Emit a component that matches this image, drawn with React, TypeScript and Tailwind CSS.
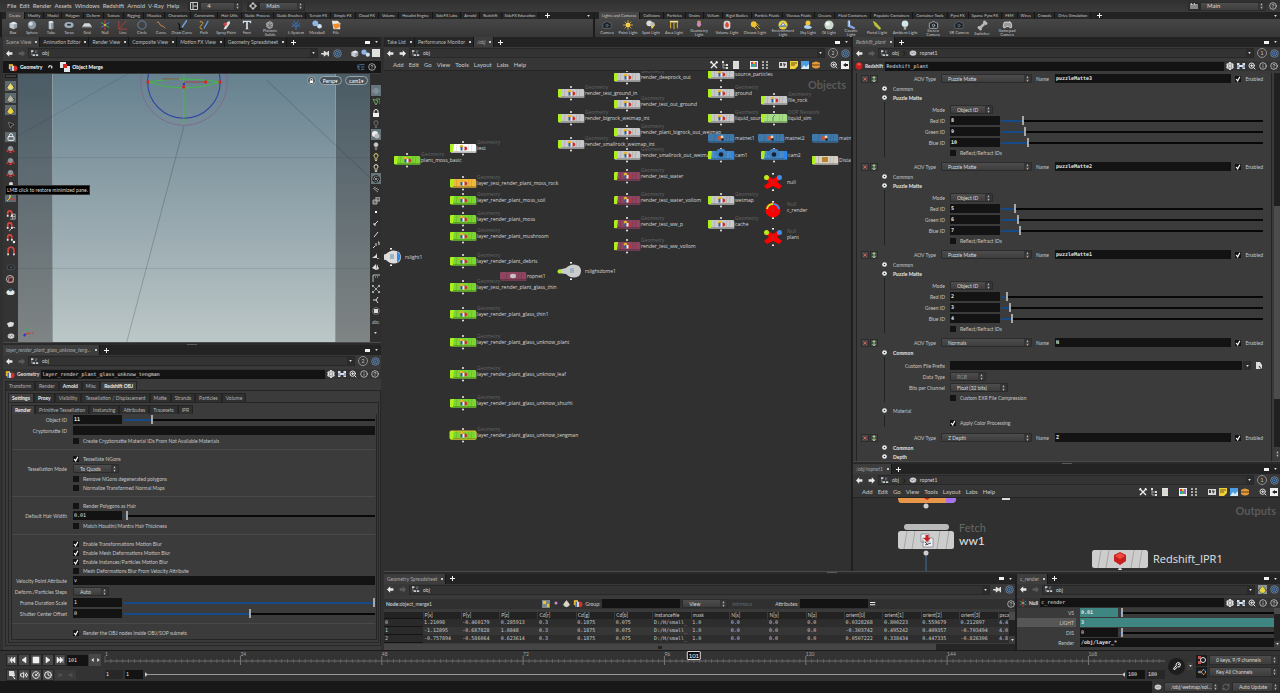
import React from 'react';
import {
  Aperture, Bone, Camera, CircleGauge, CircleHelp, Clock, Eye, Gamepad2, Info, KeyRound,
  Lightbulb, ListTree, Lock, MousePointer2, RefreshCw, Settings, Volume2, ZoomIn,
} from 'lucide-react';
import clsx from 'clsx';
import { twMerge } from 'tailwind-merge';

const tiny = 'h-2 w-2 shrink-0';

/* ---------- small drawings ---------- */

const toolArt: Record<string, React.ReactNode> = {
  Box: <><path d="M2 4l5-2 4 2v5l-4 2-5-2z" fill="#9aa3aa" /><path d="M2 4l5 1.500v5.500l-5-2z" fill="#c3cbd1" /><path d="M2 4l5-2 4 2-4 1.500z" fill="#e3e8ec" /></>,
  Sphere: <><circle cx="6" cy="6" r="5" fill="#8c98a3" /><circle cx="4.500" cy="4.500" r="2.500" fill="#cfd8df" /></>,
  Tube: <><path d="M3 2.500v8q3 1.500 6 0v-8z" fill="#8e9aa4" /><path d="M4 3v7.500h2V3z" fill="#c9d1d7" /><ellipse cx="6" cy="2.500" rx="3" ry="1.300" fill="#dfe5e9" /></>,
  Torus: <><ellipse cx="6" cy="6" rx="5.500" ry="3.500" fill="#9fb0be" /><ellipse cx="6" cy="5.600" rx="2.500" ry="1.200" fill="#333" /></>,
  Grid: <><path d="M3 4h6l3 4H0z" fill="#d4d8db" /><path d="M0 8h12v1H0z" fill="#8b8f92" /></>,
  Null: <><path d="M6 0v12" stroke="#d33" strokeWidth="1.200" /><path d="M1 3l10 6" stroke="#3fae49" strokeWidth="1.200" /><path d="M11 3L1 9" stroke="#3a7fe0" strokeWidth="1.200" /><circle cx="6" cy="6" r="1.200" fill="#f3c63a" /></>,
  Line: <path d="M1 11L10 1M1 11h10M1 11V1" stroke="#b2423f" fill="none" />,
  Circle: <circle cx="6" cy="6" r="5" stroke="#6f8fb5" fill="none" />,
  Curve: <path d="M1 3q2-2 3 1t3 3 4 3" stroke="#d08a4a" fill="none" strokeWidth="1.200" />,
  'Draw Curve': <><path d="M1 4q3 1 2 5t4 1" stroke="#111" fill="none" strokeWidth="1.500" /><path d="M12 0L6 9" stroke="#6fa2dd" strokeWidth="1.800" /></>,
  Path: <><path d="M1 2q6 0 2 4t1 5" stroke="#d9a534" fill="none" strokeWidth="1.200" /><path d="M11 1L6 10" stroke="#5f96d8" strokeWidth="1.500" /></>,
  'Spray Paint': <><path d="M3 11L7 3l3-2 1 3-5 7z" fill="#d8dbdd" /><circle cx="5" cy="5" r="2" fill="#cf4444" /></>,
  Font: <path d="M1 1h10v3h-1L9 2.500H7V10l1 1H4l1-1V2.500H3L2 4H1z" fill="#d6e2ee" />,
  'Platonic Solids': <><path d="M6 1l4 3-1 5-3 2-4-2-1-5z" fill="#a9a9a9" /><path d="M6 1v10M2 4l7 5M10 4L2 9" stroke="#666" /></>,
  'L-System': <path d="M6 12V5M6 8L1 4M6 8l5-4M6 5L3 1M6 5l3-4M1 8l3-1M11 8L8 7" stroke="#3c75bd" strokeWidth="1.200" fill="none" />,
  Metaball: <><circle cx="4" cy="4" r="3.500" fill="#8db6e4" /><circle cx="9" cy="7.500" r="2.800" fill="#cfe0f3" /></>,
  File: <><path d="M1 1h7l3 3v7H3z" fill="#e8e4dc" /><path d="M2 5l8-1 1 4-6 3z" fill="#ee8a2c" /></>,
  'Point Light': <><circle cx="6" cy="6" r="2.800" fill="#ffe682" /><path d="M6 0v12M0 6h12M2 2l8 8M10 2l-8 8" stroke="#eec02f" strokeWidth="0.900" /></>,
  'Spot Light': <><circle cx="4" cy="4" r="3.500" fill="#dcdcdc" /><path d="M5 4l6 2-4 5z" fill="#f2cf46" /><circle cx="8" cy="5" r="2.500" fill="#b8bcbf" /></>,
  'Area Light': <><path d="M1 1h10v2H1z" fill="#f7e18a" /><path d="M2 3v7M6 3v8M10 3v7" stroke="#e4b52f" strokeWidth="1.200" /></>,
  'Geometry Light': <><path d="M4 1h4v6q-2 3-4 0z" fill="#cda24a" /><circle cx="6" cy="5" r="2.500" fill="#c986c2" /></>,
  'Volume Light': <><rect x="2" y="1" width="8" height="10" rx="3" fill="#d3d6d8" /><path d="M6 2q4 4 1 7H5Q2 6 6 2z" fill="#e7452b" /></>,
  'Distant Light': <><circle cx="4.500" cy="5" r="3.500" fill="#efc12f" /><path d="M6 5l6 6M8 4l3 3M4 8l4 3" stroke="#efc12f" /></>,
  'Environment Light': <><circle cx="6" cy="6" r="5.500" fill="#f0cf3c" /><path d="M1 8h10M6 3l3 4H3z" stroke="#4a7bb7" fill="#cfe0f0" /></>,
  'Sky Light': <><circle cx="6" cy="3.500" r="3" fill="#f2c632" /><path d="M1 8q2-3 5-2t5 3q-4 3-9 1z" fill="#aecdf0" /></>,
  'GI Light': <><circle cx="6" cy="6" r="5.500" fill="#ccd8cd" /><circle cx="4.500" cy="4.500" r="2.500" fill="#eef3ee" /></>,
  'Caustic Light': <><path d="M2 1h3v5l6 3-1 2-8-3z" fill="#86a9df" /><path d="M3 1h1v6" stroke="#eaf0fa" fill="none" /></>,
  'Portal Light': <><path d="M1 1l4 2 6 7-2 2-6-5z" fill="#a4b13f" /><path d="M2 2l8 9" stroke="#e7cf45" /></>,
  'Ambient Light': <><circle cx="6" cy="4.500" r="4" fill="#cfe9ea" /><path d="M4.500 8h3v3.500h-3z" fill="#a7aeb0" /></>,
};

function ToolIcon({ name }: { name: string }) {
  if (name === 'Gamepad Camera') return <Gamepad2 className="h-[11px] w-[11px] text-[#e4e4e4]" fill="#999" />;
  if (name === 'Switcher') return <Bone className="h-[11px] w-[11px] text-[#bbb]" fill="#bbb" />;
  if (name === 'VR Camera' || name === 'Camera') return <Camera className="h-[10px] w-[10px] text-[#5d6d7a]" fill="#1b1f22" />;
  if (name === 'Stereo Camera') return <Camera className="h-[11px] w-[11px] text-[#a9bfcd]" fill="#222" />;
  return <svg viewBox="0 0 12 12" className="h-[10px] w-[10px]">{toolArt[name]}</svg>;
}

function Spin() {
  return (
    <svg viewBox="0 0 4 8" className="h-[6px] w-[3px] shrink-0" fill="#b5b5b5">
      <path d="M2 0l1.500 3h-3zM2 8L.5 5h3z" />
    </svg>
  );
}

function Plus() {
  return <svg viewBox="0 0 5 5" className="h-[5px] w-[5px]"><path d="M2 0h1v2h2v1H3v2H2V3H0V2h2z" fill="#f2f2f2" /></svg>;
}

function Caret() {
  return <svg viewBox="0 0 4 3" className="h-[2px] w-[3px]" fill="#ddd"><path d="M0 0h4L2 3z" /></svg>;
}

function Arrow({ flip, on }: { flip?: boolean; on?: boolean }) {
  return (
    <svg viewBox="0 0 10 8" className={clsx('h-[7px] w-[8px] shrink-0', flip && 'rotate-180')}>
      <path d="M0 4l4-4v2.500h4v3H4V8z" fill={on ? '#e8e8e8' : '#5c5c5c'} />
    </svg>
  );
}

function PinIcon() {
  return (
    <svg viewBox="0 0 10 8" className="h-[7px] w-[9px] shrink-0">
      <path d="M0 3.500h3V5H0zM3 1h1.500l1 1.500h2V1H9v6H7.500V5.500h-2l-1 1.500H3z" fill="#dedede" />
    </svg>
  );
}

function GeoIcon() {
  return (
    <svg viewBox="0 0 12 10" className="h-[9px] w-[10px] shrink-0">
      <rect x="1" y="1" width="5" height="6" fill="#e9b62f" />
      <circle cx="8" cy="6" r="3.500" fill="#cf3329" />
      <path d="M3 3h4v6H3z" fill="#e8edf2" />
      <path d="M3 3h2v6H3z" fill="#3a6ba8" />
    </svg>
  );
}

function RedshiftIcon() {
  return (
    <svg viewBox="0 0 12 12" className="h-2 w-2 shrink-0">
      <path d="M6 0l5 3v6l-5 3-5-3V3z" fill="#c8201e" />
      <path d="M6 1l4 2-4 3-4-3z" fill="#ef4b43" />
    </svg>
  );
}

function NetIcon() {
  return (
    <svg viewBox="0 0 10 8" className="h-[7px] w-[8px] shrink-0">
      <path d="M0 0h3v2H0zM2 5h3v2H2zM6 5h3v2H6z" fill="#c6cdd2" />
      <path d="M1 2v4h1M5 1h3M5 3h2" stroke="#8a8f93" fill="none" />
    </svg>
  );
}

function Disc() {
  return (
    <svg viewBox="0 0 10 10" className="h-[9px] w-[9px] shrink-0">
      <circle cx="5" cy="5" r="4.200" fill="#2b3948" stroke="#8298b0" strokeWidth="0.800" />
      <circle cx="5" cy="5" r="2.400" fill="none" stroke="#5d87bd" />
      <circle cx="5" cy="5" r="1" fill="#4f83c4" />
    </svg>
  );
}

function NetBall() {
  return (
    <svg viewBox="0 0 10 8" className="h-[6px] w-[8px] shrink-0">
      <ellipse cx="5" cy="4" rx="4.500" ry="3.500" fill="#cfcfcf" />
      <path d="M2 3l2 2 2-2 2 2" stroke="#777" fill="none" />
    </svg>
  );
}

/* ---------- form controls ---------- */

function TextBox({ label, value, className }: { label: string; value: string; className?: string }) {
  return (
    <input
      aria-label={label}
      defaultValue={value}
      className={twMerge('h-[9px] min-w-0 bg-[#131313] px-px font-[DejaVu_Sans_Mono,monospace] text-[5px] leading-[9px] text-[#e4e4e4] outline-none', className)}
    />
  );
}

function Select({ label, value, className, dim }: { label: string; value: string; className?: string; dim?: boolean }) {
  return (
    <span className={twMerge('flex h-[9px] shrink-0 items-center rounded-[1px] border border-[#2b2b2b] bg-linear-to-b from-[#4d4d4d] to-[#3d3d3d]', className)}>
      <select aria-label={label} defaultValue={value} className={clsx('h-full min-w-0 flex-1 appearance-none pl-[6px] outline-none', dim ? 'text-[#909090]' : 'text-[#dcdcdc]')}>
        <option>{value}</option>
      </select>
      <span className="flex h-full w-[7px] items-center justify-center bg-[#353535]"><Spin /></span>
    </span>
  );
}

function Check({ label, checked }: { label: string; checked?: boolean }) {
  return (
    <label className="flex items-center gap-1 whitespace-nowrap">
      <span className="grid h-[6px] w-[6px]">
        <input type="checkbox" defaultChecked={checked} className="peer col-start-1 row-start-1 h-[6px] w-[6px] appearance-none bg-[#131313]" />
        <svg viewBox="0 0 8 8" className="pointer-events-none invisible col-start-1 row-start-1 h-[6px] w-[6px] peer-checked:visible">
          <path d="M1.500 4l2 2.500L6.500 1" stroke="#fff" strokeWidth="1.600" fill="none" />
        </svg>
      </span>
      {label}
    </label>
  );
}

function Slider({ label, value }: { label: string; value: number }) {
  return (
    <input
      type="range"
      aria-label={label}
      defaultValue={value}
      style={{ backgroundImage: `linear-gradient(to right, #164a86 ${value}%, #080808 ${value}%)` }}
      className="h-[9px] min-w-0 flex-1 appearance-none bg-[length:100%_2px] bg-center bg-no-repeat [&::-webkit-slider-thumb]:h-[9px] [&::-webkit-slider-thumb]:w-[2px] [&::-webkit-slider-thumb]:appearance-none [&::-webkit-slider-thumb]:bg-[#a8a8a8]"
    />
  );
}

/* ---------- pane chrome ---------- */

function PaneTabs({ tabs, active = 0 }: { tabs: string[]; active?: number }) {
  return (
    <div className="flex h-[10px] shrink-0 items-stretch bg-[#232323]">
      {tabs.map((tab, i) => (
        <button key={tab} className={clsx('flex shrink-0 items-center gap-[4px] border-r border-[#161616] pl-[3px] pr-[2px]', i === active ? 'bg-[#3d3d3d] text-[#a8a8a8]' : 'bg-[#262626] text-[#bdbdbd]', (tab.includes('_') || tab.startsWith('/')) && tab !== 'c_render' && 'italic')}>
          <span>{tab}</span>
          <span className="h-[2px] w-[2px] bg-[#c8c8c8]" />
        </button>
      ))}
      <button aria-label="Add tab" className="flex items-center pl-[4px]"><Plus /></button>
      <span className="ml-auto flex items-center gap-[5px] pr-[3px]">
        <span className="h-[3px] w-[5px] bg-[#f2f2f2]" />
        <Caret />
      </span>
    </div>
  );
}

function PathBar({ crumbs, forward, children }: { crumbs: string[]; forward?: boolean; children: React.ReactNode }) {
  return (
    <div className="flex h-[12px] shrink-0 items-center gap-[3px] bg-[#383838] pl-[3px] pr-px">
      <button aria-label="Back"><Arrow on /></button>
      <button aria-label="Forward"><Arrow flip on={forward} /></button>
      <div className="flex h-[10px] min-w-0 flex-1 items-center gap-[3px] border border-[#282828] bg-[#333] pl-[2px] text-[#d4d4d4]">
        {crumbs.map((c, i) => (
          <span key={c} className="flex items-center gap-[3px]">
            {i > 0 ? <><span className="text-[#1c1c1c]">❯</span><NetBall /></> : <NetIcon />}
            {c}
          </span>
        ))}
        <button aria-label="Path history" className="ml-auto flex h-full w-[7px] items-center justify-center bg-[#2b2b2b]"><Caret /></button>
      </div>
      {children}
    </div>
  );
}

function Num({ n }: { n: number }) {
  return <span className="flex h-[10px] w-[10px] shrink-0 items-center justify-center rounded-full border border-[#8f8f8f] text-[#ccc]">{n}</span>;
}

function Splitter() {
  return (
    <div className="flex h-[3px] shrink-0 items-center justify-center border-t border-[#4a4a4a] bg-[#2a2a2a]">
      <span className="h-px w-[10px] bg-[#5a5a5a]" />
    </div>
  );
}

function NameBar({ icon, kind, name }: { icon: React.ReactNode; kind: string; name: string }) {
  return (
    <div className="flex h-[10px] shrink-0 items-center gap-[2px] bg-[#333] pl-[2px]">
      {icon}
      <span className="font-bold text-[#e0e0e0]">{kind}</span>
      <TextBox label="Node name" value={name} className="flex-1" />
      <span className="flex items-center gap-[3px] pr-[2px] text-[#e6e6e6]">
        <Settings className={tiny} strokeWidth={4} />
        <svg viewBox="0 0 8 8" className={tiny}><path d="M0 1h2.500v6H0zM5.500 1H8v6H5.500zM2 3h4v2H2z" fill="#d7deec" /><path d="M1 3v3M7 3v3" stroke="#52648c" /></svg>
        <ZoomIn className={tiny} strokeWidth={3} />
        <Info className={tiny} strokeWidth={2} />
        <CircleHelp className={tiny} strokeWidth={2} />
      </span>
    </div>
  );
}

function NetMenu() {
  return (
    <div className="flex h-[12px] shrink-0 items-center gap-[5px] border-b border-[#252525] bg-[#363636] pl-[9px] pr-[2px] text-[6px] text-[#c9c9c9]">
      {['Add', 'Edit', 'Go', 'View', 'Tools', 'Layout', 'Labs', 'Help'].map((m) => <button key={m}>{m}</button>)}
      <span className="ml-auto flex items-center gap-[10px]">
        <span className="flex gap-[3px]">
          <svg viewBox="0 0 8 8" className={tiny}><path d="M1 1l6 6M7 1L1 7" stroke="#f0f0f0" strokeWidth="1.300" /><path d="M0 2l2-2M6 0l2 2" stroke="#f0f0f0" strokeWidth="1.200" /></svg>
          <svg viewBox="0 0 8 8" className={tiny}><path d="M2 1v6h3M2 4h3" stroke="#bbb" fill="none" strokeWidth=".8" /><path d="M1 0h2v2H1zM5 3h2v2H5zM5 6h2v2H5z" fill="#ddd" /></svg>
          <svg viewBox="0 0 8 8" className={tiny}><path d="M1 0h6v8H1z" fill="#e4e4e0" /><path d="M1 2h6M1 4h6M1 6h6" stroke="#bbb" strokeWidth=".5" /></svg>
        </span>
        <span className="flex gap-[3px]">
          <svg viewBox="0 0 8 8" className={tiny}><path d="M0 0h8v8H0z" fill="#eee" /><path d="M1 1h2v2H1z" fill="#d33" /><path d="M3 1h2v2H3z" fill="#e9c22c" /><path d="M1 3h2v3H1z" fill="#39c" /><path d="M3 3h2v3H3z" fill="#4b4" /><path d="M5 1h2v5H5z" fill="#96c" /></svg>
          <svg viewBox="0 0 8 8" className={tiny} fill="#aaa"><path d="M1 0h2v2H1zM5 0h2v2H5zM1 3h2v2H1zM5 3h2v2H5zM1 6h2v2H1zM5 6h2v2H5z" /></svg>
        </span>
        <span className="flex gap-[3px]">
          <svg viewBox="0 0 8 8" className={tiny}><path d="M0 1h8v6H0z" fill="#d9d9d9" /><path d="M4 2l3 1-2 3zM1 2h2v3H1z" fill="#444" /></svg>
          <svg viewBox="0 0 8 8" className={tiny}><path d="M0 0h8v5L5 8H0z" fill="#f0cf3a" /><path d="M1 2h6M1 4h4" stroke="#6b5a10" /></svg>
          <svg viewBox="0 0 8 8" className={tiny}><path d="M0 0h8v8H0z" fill="#4d9be0" /><path d="M0 8l3-4 2 2 3-3v5z" fill="#d9ecf5" /></svg>
          <svg viewBox="0 0 8 8" className={tiny}><path d="M0 2q4-3 8 0v4q-4 3-8 0z" fill="#e09a3e" /><path d="M0 4h8" stroke="#6e3f10" /></svg>
        </span>
        <span className="flex gap-[3px]">
          <ZoomIn className={tiny} strokeWidth={3} color="#ddd" />
          <svg viewBox="0 0 8 8" className={tiny}><path d="M0 0h8v8H0z" fill="#f0f0f0" /><path d="M2 4l3-2v4z" fill="#222" /><path d="M5 3h2v2H5z" fill="#222" /></svg>
        </span>
      </span>
    </div>
  );
}

/* ---------- shelves ---------- */

type Tool = [string, string];

const leftTools: Tool[] = [
  ['Box', 'w-[18px]'], ['Sphere', 'w-[20px]'], ['Tube', 'w-[18px]'], ['Torus', 'w-[18px]'], ['Grid', 'w-[18px]'], ['Null', 'w-[18px]'],
  ['Line', 'w-[18px]'], ['Circle', 'w-[20px]'], ['Curve', 'w-[18px]'], ['Draw Curve', 'w-[24px]'], ['Path', 'w-[20px]'], ['Spray Paint', 'w-[24px]'],
  ['Font', 'w-[18px]'], ['Platonic Solids', 'w-[28px]'], ['L-System', 'w-[24px]'], ['Metaball', 'w-[18px]'], ['File', 'w-[20px]'],
];
const rightTools: Tool[] = [
  ['Camera', 'w-[20px]'], ['Point Light', 'w-[22px]'], ['Spot Light', 'w-[24px]'], ['Area Light', 'w-[22px]'], ['Geometry Light', 'w-[28px]'],
  ['Volume Light', 'w-[28px]'], ['Distant Light', 'w-[28px]'], ['Environment Light', 'w-[28px]'], ['Sky Light', 'w-[22px]'], ['GI Light', 'w-[20px]'],
  ['Caustic Light', 'w-[24px]'], ['Portal Light', 'w-[28px]'], ['Ambient Light', 'w-[28px]'], ['Stereo Camera', 'w-[28px]'], ['VR Camera', 'w-[24px]'],
  ['Switcher', 'w-[22px]'], ['Gamepad Camera', 'w-[28px]'],
];
const leftShelf = ['Create', 'Modify', 'Model', 'Polygon', 'Deform', 'Texture', 'Rigging', 'Muscles', 'Characters', 'Constraints', 'Hair Utils', 'Guide Process', 'Guide Brushes', 'Terrain FX', 'Simple FX', 'Cloud FX', 'Volume', 'Houdini Engine', 'SideFX Labs', 'Arnold', 'Redshift', 'SideFX Education'];
const rightShelf = ['Lights and Cameras', 'Collisions', 'Particles', 'Grains', 'Vellum', 'Rigid Bodies', 'Particle Fluids', 'Viscous Fluids', 'Oceans', 'Fluid Containers', 'Populate Containers', 'Container Tools', 'Pyro FX', 'Sparse Pyro FX', 'FEM', 'Wires', 'Crowds', 'Drive Simulation'];
const wrapped = ['Platonic Solids', 'Geometry Light', 'Environment Light', 'Caustic Light', 'Stereo Camera', 'Gamepad Camera'];

function Shelf({ tabs, tools }: { tabs: string[]; tools: Tool[] }) {
  return (
    <div className="min-w-0 overflow-hidden border-l-2 border-[#1c1c1c] text-[4px] leading-[4px] text-[#c8c8c8]">
      <div className="flex h-[7px] bg-[#222] pl-[4px]">
        {tabs.map((t, i) => (
          <button key={t} className={clsx('shrink-0 whitespace-nowrap border-r border-[#151515] px-[3px]', i === 0 ? 'bg-[#484848]' : 'bg-[#272727]')}>{t}</button>
        ))}
        <button aria-label="Add shelf" className="px-[6px]"><Plus /></button>
        <span className="ml-auto mr-[3px] self-center"><Caret /></span>
      </div>
      <div className="flex h-[18px] bg-linear-to-b from-[#464646] to-[#373737] pl-[2px]">
        {tools.map(([name, w]) => (
          <button key={name} className={clsx('flex shrink-0 flex-col items-center pt-px', w)}>
            <ToolIcon name={name} />
            <span className={clsx('text-center', wrapped.includes(name) ? '-mt-px w-min' : 'mt-px whitespace-nowrap')}>{name}</span>
          </button>
        ))}
      </div>
    </div>
  );
}

/* ---------- scene view ---------- */

function SideTool({ hi, children }: { hi?: boolean; children: React.ReactNode }) {
  return <button className={clsx('flex h-[12px] w-[11px] shrink-0 items-center justify-center', hi && 'border-y border-[#343434] bg-[#5d6a70]')}>{children}</button>;
}

function RedTool() {
  return (
    <svg viewBox="0 0 10 10" className="h-[9px] w-[9px]">
      <circle cx="5" cy="4" r="3" fill="#8b9399" />
      <path d="M0 8l2-4 1 3zM10 8L8 4 7 7zM3 9h4L5 6z" fill="#d1322a" />
    </svg>
  );
}

function MagnetTool({ kind }: { kind: number }) {
  const small = kind !== 3;
  return (
    <svg viewBox="0 0 12 12" className="h-[10px] w-[10px]" fill="none">
      <path d={small ? 'M2 7V4q0-3 2.500-3T7 4v3' : 'M2.500 9V5Q2.500 1.500 6 1.500T9.500 5v4'} stroke="#d9443c" strokeWidth="2" />
      <path d={small ? 'M1 7h2M6 7h2' : 'M1.500 10h2M8.500 10h2'} stroke="#eee" strokeWidth="2" />
      {kind === 0 && <path d="M6 5h5v6H5M8 5v6M5 8h6" stroke="#ddd" strokeWidth=".8" />}
      {kind === 1 && <path d="M4 11q3-6 7-4" stroke="#ddd" />}
      {kind === 2 && <circle cx="9.500" cy="9.500" r="1.500" fill="#eee" />}
    </svg>
  );
}

function Ball({ fill }: { fill: string }) {
  return <svg viewBox="0 0 10 10" className="h-[9px] w-[9px]"><path d="M0 6l5-5 5 5-5 4z" fill="#3c3f40" /><path d="M1 7l4-6 4 6z" fill={fill} /><circle cx="5" cy="6" r="2.800" fill={fill} /></svg>;
}

const rightArt = [
  <Eye className={tiny} color="#9fb0b8" />,
  <svg viewBox="0 0 8 8" className={tiny}><path d="M1 1l5 2-2 4zM4 1h4v5" stroke="#6aa362" fill="none" /></svg>,
  <svg viewBox="0 0 8 8" className={tiny}><path d="M2 4V2.500q0-2 2-2t2 2V4" stroke="#eee" fill="none" /><path d="M1 4h6v4H1z" fill="#eee" /></svg>,
  <Lightbulb className={tiny} color="#999" />,
  <svg viewBox="0 0 8 8" className={tiny}><circle cx="3" cy="3" r="3" fill="#eee" /><circle cx="5" cy="5" r="2.500" fill="#bbb" /></svg>,
  <Lightbulb className={tiny} color="#ccc" fill="#ccc" />,
  <Lightbulb className={tiny} strokeWidth={3} color="#e9e08a" />,
  <Lightbulb className={tiny} strokeWidth={3} color="#f5efc9" />,
  <Aperture className={tiny} strokeWidth={3} color="#181818" fill="#ddd" />,
  <svg viewBox="0 0 8 8" className={tiny}><path d="M1 2l5 4M2 1l5 3" stroke="#999" /></svg>,
  <svg viewBox="0 0 8 8" className={tiny}><path d="M4 0h4v4H4zM1 3h4v4H1z" stroke="#aaa" fill="#666" /></svg>,
  <span className="h-[2px] w-[2px] bg-white" />,
  <svg viewBox="0 0 8 8" className={tiny}><path d="M6 2L2 6M2 4v2h2" stroke="#ddd" fill="none" /></svg>,
  <svg viewBox="0 0 8 8" className={tiny}><path d="M6 2L2 7" stroke="#ddd" /></svg>,
  <svg viewBox="0 0 8 8" className={tiny}><path d="M1 7l2-2M4 2v3M6 1h1v3" stroke="#ddd" fill="none" /></svg>,
  <svg viewBox="0 0 8 8" className={tiny}><path d="M0 6l4-3 1-2v6l3-1" fill="#ddd" /></svg>,
  <svg viewBox="0 0 8 8" className={tiny}><path d="M0 5l4-4v6zM5 1l2 5-3 1z" fill="#ddd" /></svg>,
  <svg viewBox="0 0 8 8" className={tiny}><path d="M1 8V1h7" stroke="#bbb" fill="none" /><path d="M3 3h1M5 3h1" stroke="#bbb" /></svg>,
  <svg viewBox="0 0 8 8" className={tiny}><path d="M1 1l2 2M7 1L5 3M1 7l2-2M7 7L5 5" stroke="#aaa" strokeWidth=".7" /><path d="M0 0h2v2H0zM6 0h2v2H6zM0 6h2v2H0zM6 6h2v2H6zM3 3h2v2H3z" fill="#aaa" /></svg>,
  <svg viewBox="0 0 8 8" className={tiny}><path d="M1 4h3l2-3M4 4l2 3" stroke="#ddd" fill="none" /></svg>,
  <svg viewBox="0 0 8 8" className={tiny}><circle cx="4" cy="4" r="3.500" stroke="#888" strokeWidth=".7" fill="none" /><path d="M2 2h4v4H2z" fill="#ddd" /></svg>,
  <span className="text-[#bbb]">abc</span>,
  <Caret />,
];

const pill = 'flex h-[9px] items-center rounded-full border border-[#9aa5a9] bg-[#48545a] px-[3px]';

function Viewport() {
  return (
    <div className="flex min-h-[264px] flex-1">
      <div className="flex w-[15px] shrink-0 flex-col items-center bg-[#343434]">
        <span className="mb-[2px] h-[4px] w-[12px] shrink-0 border border-[#1c1c1c] bg-[#3d3d3d]" />
        <SideTool hi><Ball fill="#eadb7a" /></SideTool>
        <SideTool hi><Ball fill="#b9b7a0" /></SideTool>
        <SideTool hi><Ball fill="#ead344" /></SideTool>
        <span className="h-[3px] shrink-0" />
        <SideTool><MousePointer2 className={tiny} fill="#111" color="#999" /></SideTool>
        <SideTool hi><Lock className={tiny} strokeWidth={3} color="#f2f2f2" /></SideTool>
        <SideTool><RedTool /></SideTool>
        <SideTool><RedTool /></SideTool>
        <SideTool><RedTool /></SideTool>
        <SideTool><svg viewBox="0 0 8 8" className={tiny}><circle cx="4" cy="3" r="2" fill="#ddd" /></svg></SideTool>
        <SideTool hi><svg viewBox="0 0 8 8" className={tiny}><path d="M3 0v5" stroke="#efe04c" strokeWidth="1.200" /><path d="M3 5l5 2" stroke="#d33" /><path d="M3 5L0 8" stroke="#e9c22c" /></svg></SideTool>
        <span className="h-[6px] shrink-0" />
        {[0, 1, 2, 3].map((i) => <SideTool key={i}><MagnetTool kind={i} /></SideTool>)}
        <span className="h-[4px] shrink-0" />
        <SideTool><Camera className={tiny} color="#56646e" fill="#222" /></SideTool>
        <SideTool><svg viewBox="0 0 10 10" className="h-[9px] w-[9px]"><circle cx="4.500" cy="4.500" r="4" stroke="#ccc" fill="none" /><path d="M3 3h5v5H3z" stroke="#c77" fill="none" /></svg></SideTool>
        <SideTool><svg viewBox="0 0 10 10" className="h-[9px] w-[9px]"><ellipse cx="5" cy="6" rx="4.500" ry="3" fill="#e3e7ea" /><circle cx="5" cy="3" r="2" fill="#3a5a70" /></svg></SideTool>
        <span className="mt-auto" />
        <SideTool><svg viewBox="0 0 10 10" className="h-[9px] w-[9px]"><path d="M1 4l4-2 4 1-1 4-5 1z" fill="#ddd" /></svg></SideTool>
        <SideTool><NetBall /></SideTool>
      </div>
      <div className="relative flex min-w-0 flex-1 overflow-hidden">
        <div className="w-[34px] bg-linear-to-b from-[#4b5c66] to-[#7f8484]" />
        <div className="flex-1 border-x border-[#8b9a9e] bg-linear-to-b from-[#66818f] via-[#93a5ac] to-[#bcc7c7]" />
        <div className="w-[34px] bg-linear-to-b from-[#4b5c66] to-[#7f8484]" />
        <svg viewBox="0 0 352 266" preserveAspectRatio="xMidYMid slice" className="absolute inset-0 h-full w-full" fill="none">
          <path d="M0 83H352M0 193H352" stroke="#2a3338" strokeOpacity=".22" strokeWidth=".6" />
          <path d="M0 62L110 0" stroke="#1f2a30" strokeOpacity=".22" strokeWidth=".6" />
          <path d="M166 52L109 267M248 6L352 104" stroke="#1f2a30" strokeOpacity=".4" strokeWidth=".6" />
          <circle cx="166" cy="8" r="43" stroke="#7f6291" strokeWidth=".8" />
          <circle cx="166" cy="8" r="36" stroke="#2c3aa8" />
          <path d="M130 8q36 12 72 0M130 8q36-6 72 0M166 0v50" stroke="#3fbf3f" strokeWidth=".9" />
          <path d="M166 8h22" stroke="#a8433c" />
          <path d="M145 5h16" stroke="#8b5a5a" strokeWidth="2" strokeOpacity=".6" />
          <path d="M129.500 7h1.500v2h-1.500zM201 7h1.500v2h-1.500zM187 7h1.500v2h-1.500zM165 12h1.500v2h-1.500z" fill="#e01f1f" stroke="#e01f1f" />
          <path d="M165 9h2v2h-2z" fill="#2630c0" />
          <path d="M9 258v-7" stroke="#3fae49" />
          <path d="M9 258l5-1" stroke="#d33" />
          <path d="M9 258l-2 2" stroke="#33c" strokeWidth="2" />
        </svg>
        <span className="absolute bottom-[10px] left-[7px] text-[4px] text-[#3fae49]">y</span>
        <span className="absolute bottom-[6px] left-[14px] text-[4px] text-[#c33]">x</span>
        <div className="absolute right-[2px] top-[2px] flex items-center gap-[3px] text-white">
          <span className="flex h-[9px] w-[9px] items-center justify-center rounded-full border border-[#9aa5a9] bg-[#48545a]">
            <svg viewBox="0 0 6 6" className="h-[5px] w-[5px]"><path d="M1.500 3V2q0-1.500 1.500-1.500T4.500 2v1" stroke="#fff" fill="none" /><path d="M1 3h4v3H1z" fill="#fff" /></svg>
          </span>
          <button className={pill}>Persp▾</button>
          <button className={pill}>cam1▾</button>
        </div>
      </div>
      <div className="flex w-[11px] shrink-0 flex-col items-center bg-[#2e2e2e] pt-[11px]">
        {rightArt.map((art, i) => (
          <button key={i} aria-label={`Display option ${i + 1}`} className={clsx('flex h-[11px] w-[10px] items-center justify-center', (i === 0 || i === 4 || i === 8) && 'bg-[#66757c]')}>{art}</button>
        ))}
      </div>
    </div>
  );
}

/* ---------- parameter panes ---------- */

function TabStrip({ tabs, active, bold }: { tabs: string[]; active: string; bold: string[] }) {
  return (
    <div className="flex h-[9px]">
      {tabs.map((t) => (
        <button key={t} className={clsx('border border-b-0 border-[#242424] px-[3px]', t === active ? 'bg-[#404040] text-[#dcdcdc]' : 'bg-[#303030] text-[#b4b4b4]', bold.includes(t) && 'font-bold text-[#eee]')}>{t}</button>
      ))}
    </div>
  );
}

function Row({ label, children }: { label?: string; children: React.ReactNode }) {
  return (
    <div className={clsx('flex items-center', label ? 'h-[11px]' : 'h-[9px]')}>
      <span className="mr-[6px] w-[55px] shrink-0 whitespace-nowrap text-right">{label}</span>
      {children}
    </div>
  );
}

function Divider() {
  return <div className="flex h-[9px] items-center"><span className="h-px w-full bg-[#494949]" /></div>;
}

function ObjectParams() {
  return (
    <div className="pb-[4px] pl-[2px] text-[#c6c6c6]">
      <TabStrip tabs={['Transform', 'Render', 'Arnold', 'Misc', 'Redshift OBJ']} active="Redshift OBJ" bold={['Arnold', 'Redshift OBJ']} />
      <div className="border border-[#262626] bg-[#3b3b3b] pb-[2px] pl-[2px] pr-px pt-[2px]">
        <TabStrip tabs={['Settings', 'Proxy', 'Visibility', 'Tessellation / Displacement', 'Matte', 'Strands', 'Particles', 'Volume']} active="Settings" bold={['Settings', 'Proxy']} />
        <div className="border border-[#262626] pb-[2px] pl-[2px] pr-px pt-[2px]">
          <TabStrip tabs={['Render', 'Primitive Tessellation', 'Instancing', 'Attributes', 'Tracesets', 'IPR']} active="Render" bold={['Render']} />
          <div className="border border-t-0 border-[#262626] pb-[2px] pr-px">
            <Row label="Object ID"><TextBox label="Object ID" value="11" className="mr-[2px] w-[49px] font-bold" /><Slider label="Object ID slider" value={11} /></Row>
            <Row label="Cryptomatte ID"><TextBox label="Cryptomatte ID" value="" className="flex-1" /></Row>
            <Row><Check label="Create Cryptomatte Material IDs From Not Available Materials" /></Row>
            <Divider />
            <Row><Check label="Tessellate NGons" checked /></Row>
            <Row label="Tessellation Mode"><Select label="Tessellation Mode" value="To Quads" className="w-[46px]" /></Row>
            <Row><Check label="Remove NGons degenerated polygons" /></Row>
            <Row><Check label="Normalize Transformed Normal Maps" /></Row>
            <Divider />
            <Row><Check label="Render Polygons as Hair" /></Row>
            <Row label="Default Hair Width"><TextBox label="Default Hair Width" value="0.01" className="mr-[2px] w-[49px]" /><Slider label="Hair width slider" value={1} /></Row>
            <Row><Check label="Match Houdini/Mantra Hair Thickness" /></Row>
            <Divider />
            <Row><Check label="Enable Transformations Motion Blur" checked /></Row>
            <Row><Check label="Enable Mesh Deformations Motion Blur" checked /></Row>
            <Row><Check label="Enable Instances/Particles Motion Blur" checked /></Row>
            <Row><Check label="Mesh Deformations Blur From Velocity Attribute" /></Row>
            <Row label="Velocity Point Attribute"><TextBox label="Velocity Point Attribute" value="v" className="flex-1" /></Row>
            <Row label="Deform./Particles Steps"><Select label="Deform./Particles Steps" value="Auto" className="w-[36px]" /></Row>
            <Row label="Frame Duration Scale"><TextBox label="Frame Duration Scale" value="1" className="mr-[2px] w-[49px]" /><Slider label="Frame duration slider" value={100} /></Row>
            <Row label="Shutter Center Offset"><TextBox label="Shutter Center Offset" value="0" className="mr-[2px] w-[49px]" /><Slider label="Shutter slider" value={50} /></Row>
            <Divider />
            <Row><Check label="Render the OBJ nodes inside OBJ/SOP subnets" checked /></Row>
          </div>
        </div>
      </div>
    </div>
  );
}

function AovHead({ type, name }: { type: string; name: string }) {
  return (
    <div className="flex h-[11px] items-center">
      <span className="flex shrink-0 gap-px pl-[4px]">
        <button aria-label="Remove AOV" className="flex h-[8px] w-[8px] items-center justify-center border border-[#2c2c2c] bg-[#454545]"><svg viewBox="0 0 4 4" className="h-[4px] w-[4px]"><path d="M.5.500l3 3M3.500.500l-3 3" stroke="#e2605a" strokeWidth=".9" /></svg></button>
        <button aria-label="Insert AOV" className="flex h-[8px] w-[8px] items-center justify-center border border-[#2c2c2c] bg-[#454545]"><svg viewBox="0 0 4 6" className="h-[6px] w-[4px]"><path d="M2 0v3M.5 1.500h3M2 3v3M.5 4L2 6l1.500-2" stroke="#a5d892" strokeWidth=".9" fill="none" /></svg></button>
      </span>
      <span className="mr-[5px] w-[58px] shrink-0 text-right">AOV Type</span>
      <Select label="AOV Type" value={type} className="w-[91px]" />
      <span className="mx-[4px] w-[15px] shrink-0">Name</span>
      <TextBox label="AOV name" value={name} className="mr-[4px] flex-1 font-bold" />
      <span className="mr-[8px] shrink-0"><Check label="Enabled" checked /></span>
    </div>
  );
}

function Fold({ label, bold }: { label: string; bold?: boolean }) {
  return (
    <button className={clsx('flex h-[9px] items-center gap-[6px] pl-[25px]', bold && 'font-bold text-[#e6e6e6]')}>
      <svg viewBox="0 0 6 6" className="h-[5px] w-[5px]"><circle cx="3" cy="3" r="2.800" fill="#f0f0f0" /><circle cx="3" cy="3" r="1" fill="#333" /></svg>
      {label}
    </button>
  );
}

function AovRow({ label, small, children }: { label?: string; small?: boolean; children: React.ReactNode }) {
  return (
    <div className={clsx('flex items-center pr-[8px]', small ? 'h-[9px]' : 'h-[11px]')}>
      <span className="mr-[5px] w-[60px] shrink-0 whitespace-nowrap text-right">{label}</span>
      {children}
    </div>
  );
}

function PuzzleMatte({ name, ids }: { name: string; ids: number[] }) {
  return (
    <section className="pb-[4px]">
      <AovHead type="Puzzle Matte" name={name} />
      <Fold label="Common" />
      <Fold label="Puzzle Matte" bold />
      <div className="ml-[27px] border-l border-[#222] pt-[2px]">
        <AovRow label="Mode"><Select label="Mode" value="Object ID" className="w-[43px]" /></AovRow>
        {['Red ID', 'Green ID', 'Blue ID'].map((l, i) => (
          <AovRow key={l} label={l}>
            <TextBox label={l} value={String(ids[i])} className="mr-px w-[50px] font-bold" />
            <Slider label={`${l} slider`} value={ids[i]} />
          </AovRow>
        ))}
        <AovRow small><Check label="Reflect/Refract IDs" /></AovRow>
      </div>
    </section>
  );
}

function VScroll({ thumb }: { thumb: string }) {
  return (
    <div className="flex w-[6px] shrink-0 flex-col justify-between bg-[#222]">
      <span className={clsx('w-full bg-[#4a4a4a]', thumb)} />
      <span className="flex h-[7px] items-center justify-center bg-[#3c3c3c]"><Caret /></span>
    </div>
  );
}

function RedshiftParams() {
  return (
    <div className="flex text-[#c6c6c6]">
      <div className="ml-[3px] min-w-0 flex-1 border-x border-[#232323] bg-[#3b3b3b]">
        <PuzzleMatte name="puzzleMatte3" ids={[8, 9, 10]} />
        <PuzzleMatte name="puzzleMatte2" ids={[5, 6, 7]} />
        <PuzzleMatte name="puzzleMatte1" ids={[2, 3, 4]} />
        <section className="pb-[5px]">
          <AovHead type="Normals" name="N" />
          <Fold label="Common" bold />
          <div className="ml-[27px] border-l border-[#222] pt-[3px]">
            <AovRow label="Custom File Prefix">
              <TextBox label="Custom File Prefix" value="" className="flex-1" />
              <span className="ml-px flex h-[9px] w-[8px] items-center justify-center bg-[#2c2c2c]"><Caret /></span>
              <svg viewBox="0 0 8 8" className="ml-[4px] h-[8px] w-[8px]"><path d="M1 0h4l2 3v4H1z" fill="#ddd" /><path d="M4 4l3 4" stroke="#222" /></svg>
            </AovRow>
            <AovRow label="Data Type"><Select label="Data Type" value="RGB" dim className="w-[36px]" /></AovRow>
            <AovRow label="Bits per Channel"><Select label="Bits per Channel" value="Float (32 bits)" className="w-[58px]" /></AovRow>
            <AovRow small><Check label="Custom EXR File Compression" /></AovRow>
          </div>
          <div className="pt-[4px]"><Fold label="Material" /></div>
          <div className="ml-[27px] border-l border-[#222] pt-[3px]">
            <AovRow small><Check label="Apply Color Processing" checked /></AovRow>
          </div>
        </section>
        <AovHead type="Z Depth" name="Z" />
        <Fold label="Common" bold />
        <Fold label="Depth" bold />
      </div>
      <div className="ml-[2px] flex w-[6px] shrink-0 flex-col bg-[#202020] pt-[133px]">
        <span className="h-[193px] bg-[#4c4c4c]" />
        <span className="mt-auto flex h-[14px] items-center justify-center bg-[#3c3c3c]"><Spin /></span>
      </div>
    </div>
  );
}

/* ---------- object network ---------- */

type NodeDef = { x: number; y: number; name: string; tone: string; type?: string; kind?: string; sel?: boolean };

const green = '#7bd62f';
const gray = '#c9c9c9';
const wine = '#8d4560';
const blue = '#3f78ab';
const G = 'Geometry';

const nodes: NodeDef[] = [
  { x: 463, y: 148, name: 'test', tone: '#ffffff', type: G },
  { x: 407, y: 160, name: 'plant_moss_basic', tone: green, type: G },
  { x: 463, y: 183, name: 'layer_test_render_plant_moss_rock', tone: '#f1b93b', type: G },
  { x: 463, y: 200, name: 'layer_render_plant_moss_soil', tone: green, type: G },
  { x: 463, y: 219, name: 'layer_render_plant_moss', tone: green, type: G },
  { x: 463, y: 236, name: 'layer_render_plant_mushroom', tone: green, type: G },
  { x: 463, y: 261, name: 'layer_render_plant_debris', tone: green, type: G },
  { x: 463, y: 287, name: 'layer_test_render_plant_glass_thin', tone: green, type: G },
  { x: 513, y: 276, name: 'ropnet1', tone: wine, kind: 'plain' },
  { x: 463, y: 314, name: 'layer_render_plant_glass_thin1', tone: green, type: G },
  { x: 463, y: 342, name: 'layer_render_plant_glass_unknow_plant', tone: green, type: G },
  { x: 463, y: 374, name: 'layer_render_plant_glass_unknow_leaf', tone: green, type: G },
  { x: 463, y: 403, name: 'layer_render_plant_glass_unknow_shuzhi', tone: green, type: G },
  { x: 463, y: 435, name: 'layer_render_plant_glass_unknow_tengman', tone: green, type: G, sel: true },
  { x: 571, y: 93, name: 'render_test_ground_in', tone: gray, type: G },
  { x: 571, y: 118, name: 'render_bigrock_wetmap_int', tone: gray, type: G },
  { x: 571, y: 144, name: 'render_smallrock_wetmap_int', tone: gray, type: G },
  { x: 627, y: 77, name: 'render_deeprock_out', tone: gray, type: G },
  { x: 627, y: 104, name: 'render_test_out_ground', tone: gray, type: G },
  { x: 627, y: 132, name: 'render_plant_bigrock_out_wetmap', tone: gray, type: G },
  { x: 627, y: 155, name: 'render_smallrock_out_wetmap_out', tone: gray, type: G },
  { x: 627, y: 176, name: 'render_test_water', tone: wine, type: G },
  { x: 627, y: 200, name: 'render_test_water_vollom', tone: wine, type: G },
  { x: 627, y: 224, name: 'render_test_ww_p', tone: wine, type: G },
  { x: 627, y: 246, name: 'render_test_ww_vollom', tone: wine, type: G },
  { x: 721, y: 74, name: 'source_particles', tone: gray },
  { x: 721, y: 93, name: 'ground', tone: gray, type: G },
  { x: 721, y: 118, name: 'liquid_source', tone: gray, type: G },
  { x: 721, y: 138, name: 'matnet1', tone: blue, kind: 'mat' },
  { x: 721, y: 155, name: 'cam1', tone: '#4a8fd0', kind: 'cam' },
  { x: 721, y: 200, name: 'wetmap', tone: gray, type: G },
  { x: 721, y: 224, name: 'cache', tone: gray, type: G },
  { x: 774, y: 100, name: 'file_rock', tone: gray, type: G },
  { x: 774, y: 118, name: 'liquid_sim', tone: '#a4de86', type: 'DOP Network', kind: 'dop' },
  { x: 771, y: 138, name: 'matnet2', tone: blue, kind: 'mat' },
  { x: 774, y: 155, name: 'cam2', tone: '#4a8fd0', kind: 'cam' },
  { x: 825, y: 138, name: 'matnet3', tone: blue, kind: 'mat' },
  { x: 825, y: 160, name: 'Distance', tone: '#d6d2c6', kind: 'dist' },
  { x: 773, y: 182, name: 'null', tone: '#f00', kind: 'cross' },
  { x: 773, y: 210, name: 'c_render', tone: '#f00', kind: 'round', type: 'Null' },
  { x: 773, y: 237, name: 'plant', tone: '#f00', kind: 'cross', type: 'Null' },
  { x: 391, y: 257, name: 'rslight1', tone: '#ddd', kind: 'light' },
  { x: 571, y: 271, name: 'rslightdome1', tone: '#ccc', kind: 'dome' },
];

function NodeArt({ n }: { n: NodeDef }) {
  if (n.kind === 'cross' || n.kind === 'round') {
    return (
      <>
        {n.kind === 'cross'
          ? <path d="M5 5l3-3 6 4 6-4 3 3-5 4 5 4-3 3-6-3-6 3-3-3 5-4z" fill="#f00" />
          : <circle cx="14" cy="9" r="7.500" fill="#f00" />}
        {n.kind === 'round' && <path d="M8 8a6 6 0 0 1 6-5" stroke="#b6f01c" strokeWidth="2" fill="none" />}
        {n.kind === 'round' && <path d="M14 3a6 6 0 0 1 6 5" stroke="#3a8fef" strokeWidth="2" fill="none" />}
        {n.kind === 'cross' && <><circle cx="7.500" cy="4.500" r="2.500" fill="#b6f01c" /><circle cx="20.500" cy="4.500" r="2.500" fill="#3a8fef" /></>}
        <path d="M14 6v6M12 8l4 2" stroke="#a33" strokeWidth=".8" />
        <circle cx="14" cy="0.800" r="1" fill="#fff" /><circle cx="14" cy="17.200" r="1" fill="#fff" />
      </>
    );
  }
  if (n.kind === 'light' || n.kind === 'dome') {
    return (
      <>
        <path d="M1 8l8-2q6-6 13-2 4 5 0 10-7 4-13-2l-8-1z" fill={n.tone} />
        {n.kind === 'light' ? <path d="M20 3q7 6 0 12z" fill="#2f86ea" /> : <circle cx="2.500" cy="9.500" r="2" fill="#b6f01c" />}
        <path d="M13 6h4v5h-4z" fill="#9fb4bf" />
        <circle cx="14" cy="0.800" r="1" fill="#fff" /><circle cx="14" cy="17.200" r="1" fill="#fff" />
      </>
    );
  }
  const plain = n.kind === 'plain' || n.kind === 'mat' || n.kind === 'dist';
  return (
    <>
      {!plain && <><circle cx="14" cy="3" r="1" fill="#eee" /><circle cx="14" cy="15.500" r="1" fill="#eee" /></>}
      <rect x="1.500" y="6" width="26" height="8" rx="1" fill={n.tone} opacity=".65" />
      <rect x="1" y="5" width="26" height="8" rx="1" fill={n.tone} stroke={n.sel ? '#f2c230' : 'none'} />
      <path d="M1 12h26v1H1z" fill="#000" opacity=".2" />
      {n.kind !== 'plain' && n.kind !== 'mat' && <path d="M2 5h3l-1 8H1V6z" fill="#aef01c" />}
      <path d="M8 5L7 13M20 5l-1 8M23 5l-1 8" stroke="#000" strokeOpacity=".18" strokeWidth=".6" />
      {n.kind === 'cam' && <><path d="M8 7l3-4h6l3 4-2 5h-8z" fill="#3d7fbf" /><circle cx="14" cy="8.500" r="2.300" fill="#14202c" /><path d="M24 5h3v8h-3z" fill="#2f86ea" /></>}
      {n.kind === 'plain' && <ellipse cx="14" cy="9" rx="3" ry="2.200" fill="#c9c0c4" />}
      {n.kind === 'mat' && <><circle cx="13" cy="9" r="2.300" fill="#c9563b" /><circle cx="15" cy="8" r="1.400" fill="#f1d9b0" /><circle cx="15.500" cy="10.500" r="1.200" fill="#222" /></>}
      {n.kind === 'dist' && <path d="M11 6h6v5h-6z" fill="#b9822f" />}
      {n.kind === 'dop' && <path d="M15 6q-3 1-2 6" stroke="#777" fill="none" />}
      {!n.kind && <><circle cx="12.500" cy="7.500" r="1.800" fill="#e6b32d" /><circle cx="16.200" cy="9.500" r="2" fill="#c93127" /><path d="M13 8h2.500v3.500H13z" fill="#e6ebf0" /><path d="M11.500 8h2v3.500h-2z" fill="#2f5f9d" /></>}
    </>
  );
}

function ObjectNetwork() {
  return (
    <div className="relative min-h-0 flex-1 overflow-hidden bg-[#303030]">
      {nodes.map((n) => (
        <div key={n.name} style={{ left: n.x - 398, top: n.y - 80 }} className="absolute flex items-center whitespace-nowrap font-['Open_Sans',sans-serif]">
          <svg viewBox="0 0 28 18" className="h-[18px] w-[28px] shrink-0"><NodeArt n={n} /></svg>
          <div className="relative text-[#dadada]">
            {n.type && <span className="absolute bottom-full left-0 text-[#646464]">{n.type}</span>}
            {n.name}
          </div>
        </div>
      ))}
      <span className="absolute right-[5px] top-[7px] text-[11px] font-bold leading-[13px] text-[#5a5a5a]">Objects</span>
    </div>
  );
}

function OutputNetwork() {
  return (
    <div className="relative min-h-[70px] flex-1 overflow-hidden bg-[#303030]">
      <svg viewBox="0 0 160 74" className="absolute left-px top-0 h-[74px] w-[160px]">
        <path d="M46 0h52q4 0 4 2t-3 3H47q-3 0-3-5z" fill="#e8974a" />
        <path d="M92 0h10q0 5-4 5h-6z" fill="#a773ee" />
        <path d="M70 0h6l-3 2z" fill="#c22" />
        <circle cx="72" cy="8" r="2.500" fill="#cfcfcf" />
        <rect x="50" y="26" width="45" height="6" rx="3" fill="#b9b9b9" />
        <rect x="44" y="33" width="56" height="18" rx="2.500" fill="#cdcdcd" />
        <path d="M53 33l-3 18M61 33l-3 18M86 33l-3 18M95 33l-3 18" stroke="#9a9a9a" strokeWidth=".8" />
        <path d="M67 36h8v8h-8zM69 40h10v9H69z" fill="#eef2f4" stroke="#667" strokeWidth=".6" />
        <path d="M71 47l6-2M71 44l3 3" stroke="#334" strokeWidth=".8" />
        <path d="M71.500 37h3v3h2l-3.500 4-3.500-4h2z" fill="#cf2020" />
        <path d="M72 57v17" stroke="#3f6ea5" />
        <circle cx="72" cy="55" r="2.500" fill="#cfcfcf" />
        <path d="M148 0h8v2h-8z" fill="#ddd" />
      </svg>
      <div className="absolute left-[106px] top-[23px] text-[11px] leading-[13px]">
        <div className="text-[#666]">Fetch</div>
        <div className="text-[12px] text-[#e2e2e2]">ww1</div>
      </div>
      <div className="absolute left-[239px] top-[50px] flex items-center gap-[5px] font-['Open_Sans',sans-serif] text-[11px] leading-[18px] text-[#e2e2e2]">
        <svg viewBox="0 0 56 22" className="h-[22px] w-[56px]">
          <rect x="0" y="2" width="56" height="18" rx="2.500" fill="#cdcdcd" />
          <path d="M9 2L6 20M17 2l-3 18M42 2l-3 18M50 2l-3 18" stroke="#9a9a9a" strokeWidth=".8" />
          <path d="M28 4l6 3v6l-6 4-6-4V7z" fill="#c8201e" /><path d="M28 5l5 3-5 3-5-3z" fill="#ef4b43" />
          <circle cx="28" cy="22" r="2" fill="#ddd" />
        </svg>
        Redshift_IPR1
      </div>
      <span className="absolute right-[4px] top-[6px] text-[11px] font-bold leading-[13px] text-[#5a5a5a]">Outputs</span>
    </div>
  );
}

/* ---------- spreadsheet ---------- */

const columns = ['P[x]', 'P[y]', 'P[z]', 'Cd[r]', 'Cd[g]', 'Cd[b]', 'instancefile', 'mask', 'N[x]', 'N[y]', 'N[z]', 'orient[0]', 'orient[1]', 'orient[2]', 'orient[3]'];
const points = [
  ['1.21098', '-0.460179', '0.285913', '0.3', '0.1875', '0.075', 'D:/H/small_', '1.0', '0.0', '0.0', '0.0', '0.0328268', '0.800223', '0.559679', '0.212897', '4.4'],
  ['-1.12895', '-0.687828', '1.0848', '0.3', '0.1875', '0.075', 'D:/H/small_', '1.0', '0.0', '0.0', '0.0', '-0.303742', '0.495242', '0.409357', '-0.703494', '4.0'],
  ['-0.757894', '-0.586064', '0.623614', '0.3', '0.1875', '0.075', 'D:/H/small_', '1.0', '0.0', '0.0', '0.0', '0.0507222', '0.338434', '0.447335', '-0.826306', '4.8'],
];

function Spreadsheet() {
  return (
    <div className="flex min-w-0 flex-col border-r-2 border-[#1e1e1e]">
      <PaneTabs tabs={['Geometry Spreadsheet']} />
      <PathBar crumbs={['obj']}><PinIcon /><Disc /></PathBar>
      <div className="mt-[3px] flex h-[10px] items-center gap-[2px] bg-[#303030] pl-[2px] text-[#d0d0d0]">
        <span className="flex-[160]"><b>Node:</b>object_merge1</span>
        <span className="bg-[#7d878c]"><svg viewBox="0 0 8 8" className={tiny}><path d="M1 1h3v3H1zM5 4h2v3H5z" fill="#e9c22c" /></svg></span>
        <svg viewBox="0 0 8 8" className={tiny}><circle cx="4" cy="3" r="1.500" fill="#c98ad0" /></svg>
        <Ball fill="#d8d8c0" />
        <GeoIcon />
        <label htmlFor="group">Group:</label>
        <input id="group" className="h-[9px] w-[78px] bg-[#131313]" />
        <Select label="View" value="View" className="w-[46px]" />
        <span className="w-[43px] pl-[2px] text-[#6a6a6a]">Intrinsics</span>
        <label htmlFor="attrs">Attributes:</label>
        <input id="attrs" className="h-[9px] min-w-0 flex-[70] bg-[#131313]" />
        <svg viewBox="0 0 8 8" className="h-[6px] w-[6px]"><path d="M0 2h7M0 5h7" stroke="#eee" strokeWidth="1.500" /></svg>
        <span className="flex-[132]" />
        <CircleHelp className={tiny} color="#ddd" />
      </div>
      <div className="mt-[3px] flex">
        <div className="min-w-0 flex-1">
          <table className="w-full table-fixed border-collapse text-left leading-[7px] text-[#cacaca]">
            <thead className="bg-[#222]">
              <tr className="h-[7px]">
                <th className="w-[39px] border-r border-[#3a3a3a] p-0" />
                {columns.map((c) => <th key={c} className="overflow-hidden border-r border-[#3a3a3a] p-0 pl-px font-normal">{c}</th>)}
                <th className="w-[11px] overflow-hidden p-0 pl-px font-normal">psca</th>
              </tr>
            </thead>
            <tbody className="font-[DejaVu_Sans_Mono,monospace]">
              {points.map((p, i) => (
                <tr key={i} className={clsx('h-[8px]', i === 1 ? 'bg-[#363636]' : 'bg-[#2d2d2d]')}>
                  <th className="border-y border-[#151515] bg-[#2a2a2a] p-0 pl-px font-normal">{i}</th>
                  {p.map((v, j) => <td key={j} className="overflow-hidden whitespace-nowrap p-0 pl-px">{v}</td>)}
                </tr>
              ))}
            </tbody>
          </table>
        </div>
        <VScroll thumb="h-[8px]" />
      </div>
      <div className="mt-px flex h-[6px] bg-[#262626] pr-[18px]"><span className="flex w-[90%] items-center justify-center bg-[#454545]"><span className="h-[3px] w-[4px] bg-[#222]" /></span></div>
    </div>
  );
}

function ControlRow({ label, hi, children }: { label: string; hi?: boolean; children: React.ReactNode }) {
  return (
    <div className="flex h-[10px] items-center gap-px">
      <span className={clsx('mr-[3px] flex h-[9px] w-[59px] shrink-0 items-center justify-end pr-[2px]', hi && 'bg-[#565656]')}>{label}</span>
      {children}
    </div>
  );
}

function RenderControls() {
  return (
    <div className="flex min-w-0 flex-col text-[#c6c6c6]">
      <PaneTabs tabs={['c_render']} />
      <PathBar crumbs={['obj']}><span className="bg-[#8a9499]"><Ball fill="#ead344" /></span><Disc /></PathBar>
      <div className="mt-[2px]"><NameBar icon={<svg viewBox="0 0 12 12" className={tiny}>{toolArt.Null}</svg>} kind="Null" name="c_render" /></div>
      <div className="flex">
        <div className="min-w-0 flex-1">
          <ControlRow label="VS"><TextBox label="VS" value="0.01" className="w-[38px] bg-[#3f8582] font-bold" /><Slider label="VS slider" value={1} /></ControlRow>
          <ControlRow label="LIGHT" hi><TextBox label="LIGHT" value="3" className="flex-1 bg-[#3f8582] font-bold" /></ControlRow>
          <ControlRow label="DIS"><TextBox label="DIS" value="0" className="w-[38px]" /><Slider label="DIS slider" value={1} /></ControlRow>
          <ControlRow label="Render"><TextBox label="Render" value="/obj/layer_*" className="flex-1 font-bold" /></ControlRow>
        </div>
        <VScroll thumb="h-[6px]" />
      </div>
    </div>
  );
}

/* ---------- playbar ---------- */

function Timeline() {
  const frames = Array.from({ length: 180 }, (_, i) => i + 1);
  const pos = (f: number) => `${((f - 1) / 180) * 100}%`;
  return (
    <div className="relative h-[17px]">
      <svg className="h-full w-full overflow-visible">
        <line x1="0" x2="100%" y1="10" y2="10" stroke="#6c6c6c" />
        {frames.map((f) => <line key={f} x1={pos(f)} x2={pos(f)} y1={f % 24 === 0 || f === 1 ? 5 : 8} y2={f % 24 === 0 ? 14 : 12} stroke="#777" strokeWidth={f % 24 === 0 ? 1 : 0.6} />)}
        {frames.filter((f) => f % 24 === 0 || f === 1).map((f) => <text key={f} x={pos(f)} y="5" fontSize="5" fill="#a5a5a5">{f}</text>)}
      </svg>
      <span style={{ left: pos(101) }} className="absolute top-0 -translate-x-1/2 rounded-[1px] border border-[#ddd] bg-[#111] px-px text-[6px] leading-[7px] text-white">101</span>
    </div>
  );
}

const playBtn = 'flex h-[12px] w-[12px] items-center justify-center border border-[#262626] bg-[#474747]';

function Playbar() {
  return (
    <div className="flex h-[31px] shrink-0 gap-[3px] border-t border-[#1b1b1b] bg-[#333] pl-[6px] pr-px">
      <div className="flex w-[96px] shrink-0 flex-col gap-[3px] pt-[3px]">
        <div className="flex items-center">
          {['M1 1v6M7 1L4 4l3 3zM4 1L2 4l2 3z', 'M6 1L2 4l4 3z', 'M1 1h6v6H1z', 'M2 1l4 3-4 3z', 'M7 1v6M1 1l3 3-3 3zM4 1l3 3-3 3z'].map((d, i) => (
            <button key={i} aria-label={['First frame', 'Play back', 'Stop', 'Play', 'Last frame'][i]} className={clsx(playBtn, i === 2 && 'bg-[#6f7f88]')}>
              <svg viewBox="0 0 8 8" className={tiny} fill="#f0f0f0" stroke="#f0f0f0" strokeWidth=".6"><path d={d} /></svg>
            </button>
          ))}
          <TextBox label="Current frame" value="101" className="mx-px h-[11px] w-[21px]" />
          <button aria-label="Step back" className="flex h-[12px] w-[6px] items-center justify-center bg-[#474747]"><svg viewBox="0 0 4 6" className="h-[4px] w-[3px]" fill="#ddd"><path d="M4 0v6L0 3z" /></svg></button>
          <button aria-label="Step forward" className="flex h-[12px] w-[6px] items-center justify-center bg-[#474747]"><svg viewBox="0 0 4 6" className="h-[4px] w-[3px]" fill="#ddd"><path d="M0 0v6l4-3z" /></svg></button>
        </div>
        <div className="flex items-center text-[#f0f0f0]">
          <button aria-label="Frame options" className={playBtn}><svg viewBox="0 0 8 8" className={tiny}><path d="M1 0h5l1 5H1z" fill="#ddd" /><path d="M4 4l3 4" stroke="#fff" /></svg></button>
          <button aria-label="Audio" className={playBtn}><Volume2 className={tiny} strokeWidth={3} /></button>
          <button aria-label="Loop" className={playBtn}><CircleGauge className={tiny} strokeWidth={3} /></button>
          <button aria-label="Realtime" className={playBtn}><Clock className={tiny} strokeWidth={3} /></button>
          <span className="ml-px flex h-[10px] w-[21px] items-center justify-around bg-[#3b3b3b]">
            <svg viewBox="0 0 6 6" className="h-[4px] w-[5px]"><path d="M1 0v6" stroke="#5b7a4a" /><path d="M5 1v4L2 3z" fill="#666" /></svg>
            <svg viewBox="0 0 6 6" className="h-[4px] w-[5px]"><path d="M5 0v6" stroke="#5b7a4a" /><path d="M1 1v4l3-2z" fill="#666" /></svg>
          </span>
        </div>
      </div>
      <div className="min-w-0 flex-1">
        <Timeline />
        <div className="flex h-[13px] items-center gap-[2px]">
          <TextBox label="Global start" value="1" className="w-[18px] bg-[#272727]" />
          <TextBox label="Range start" value="1" className="w-[18px]" />
          <svg viewBox="0 0 4 6" className="h-[5px] w-[3px]" fill="#ccc"><path d="M0 0v6l4-3z" /></svg>
          <span className="-mx-[2px] h-px flex-1 bg-[#9a9a9a]" />
          <svg viewBox="0 0 4 6" className="h-[5px] w-[3px]" fill="#ccc"><path d="M4 0v6L0 3z" /></svg>
          <TextBox label="Range end" value="180" className="w-[18px]" />
          <TextBox label="Global end" value="180" className="w-[18px] bg-[#272727]" />
        </div>
      </div>
      <div className="flex shrink-0 items-center gap-[2px]">
        <button aria-label="Set key" className="flex h-[17px] w-[17px] items-center justify-center rounded-full bg-[#1d1d1d] text-white"><KeyRound className={tiny} strokeWidth={3} /></button>
        <span className="mr-px flex h-[8px] w-[6px] items-center justify-center bg-[#3c3c3c]"><Caret /></span>
        <div className="flex w-[11px] flex-col gap-px">
          <button aria-label="Scoped channels" className="flex h-[11px] items-center justify-center bg-[#1a1a1a]"><svg viewBox="0 0 8 8" className={tiny}><path d="M0 0h3v3H0zM0 5h3v3H0z" fill="#b55" /><circle cx="5" cy="4" r="2.500" stroke="#ddd" fill="none" /></svg></button>
          <button aria-label="Animation editor" className="flex h-[11px] items-center justify-center bg-[#1a1a1a]"><svg viewBox="0 0 8 8" className={tiny}><path d="M0 5q2-4 4 0t4-2" stroke="#d98b3a" fill="none" /><path d="M0 3q2 4 4 0t4 2" stroke="#6fa2dd" fill="none" /></svg></button>
        </div>
        <div className="flex w-[70px] flex-col gap-[2px]">
          <Select label="Keys" value="0 keys, 9/9 channels" className="h-[10px]" />
          <Select label="Key mode" value="Key All Channels" className="h-[10px]" />
        </div>
      </div>
    </div>
  );
}

/* ---------- app ---------- */

export default function App() {
  return (
    <div className="relative flex min-h-screen flex-col overflow-hidden bg-[#3a3a3a] font-[Lato,sans-serif] text-[5px] leading-[6px] text-[#cccccc]">
      <header className="flex h-[12px] shrink-0 items-center gap-[3px] bg-linear-to-b from-[#303030] to-[#3b3b3b] pl-[7px] pr-[3px] text-[6px]">
        {['File', 'Edit', 'Render', 'Assets', 'Windows', 'Redshift', 'Arnold', 'V-Ray', 'Help'].map((m) => <button key={m}>{m}</button>)}
        <span className="ml-[6px] mr-[2px] flex items-center gap-[2px] bg-[#2b2b2b] pl-[2px]">
          <svg viewBox="0 0 8 8" className={tiny} fill="none" stroke="#ccc"><path d="M.5.500h7v7h-7zM3 0v8M3 4h5" /></svg>
          <Select label="Desktop" value="4" className="w-[42px]" />
        </span>
        <span className="flex items-center gap-[2px] bg-[#2b2b2b] pl-[2px]">
          <svg viewBox="0 0 8 8" className={tiny} fill="none" stroke="#ccc"><circle cx="4" cy="4" r="2.500" /><path d="M4 0v3M4 5v3M0 4h3M5 4h3" /></svg>
          <Select label="Radial menu" value="Main" className="w-[46px]" />
        </span>
        <span className="ml-auto flex items-center gap-[2px] bg-[#2b2b2b] pl-[2px]">
          <svg viewBox="0 0 8 6" className="h-[6px] w-[8px]"><path d="M0 1h8v5H0z" fill="#888" /><path d="M1 0l1 2M4 0l1 2" stroke="#ddd" /></svg>
          <Select label="Take" value="Main" className="w-[66px]" />
        </span>
        <CircleHelp className={tiny} color="#ddd" />
      </header>

      <div className="grid shrink-0 grid-cols-[minmax(0,593fr)_minmax(0,687fr)]">
        <Shelf tabs={leftShelf} tools={leftTools} />
        <Shelf tabs={rightShelf} tools={rightTools} />
      </div>

      <main className="grid min-h-0 flex-1 grid-cols-[minmax(0,384fr)_minmax(0,896fr)]">
        <div className="flex flex-col border-x-3 border-[#303030]">
          <PaneTabs tabs={['Scene View', 'Animation Editor', 'Render View', 'Composite View', 'Motion FX View', 'Geometry Spreadsheet']} />
          <PathBar crumbs={['obj']}>
            <PinIcon />
            <Disc />
            <span className="flex items-center gap-[2px] pl-[5px]">
              <svg viewBox="0 0 12 12" className="h-[9px] w-[9px]">{toolArt.Box}</svg>
              <svg viewBox="0 0 12 12" className="h-[9px] w-[9px]">{toolArt.Metaball}</svg>
              <span className="h-[8px] w-[8px] bg-[#e2e2de]" />
            </span>
          </PathBar>
          <div className="mb-px mt-[2px] flex h-[12px] shrink-0 items-center gap-[2px] bg-[#161616] px-[5px] font-bold text-white">
            <GeoIcon />Geometry
            <svg viewBox="0 0 8 8" className="mx-[4px] h-[6px] w-[6px]"><path d="M1 5q0-4 4-2v3" stroke="#eee" strokeWidth="1.500" fill="none" /></svg>
            <svg viewBox="0 0 10 10" className="h-[10px] w-[10px]"><path d="M0 0h6v6H0zM4 4h6v6H4z" fill="#e2e6e9" /><path d="M3 2h4v4H3z" fill="#d22" /></svg>
            Object Merge
            <span className="ml-auto flex items-center gap-[3px]"><ListTree className={tiny} color="#6d9cd8" /><CircleHelp className={tiny} color="#ddd" /></span>
          </div>
          <Viewport />
          <Splitter />
          <PaneTabs tabs={['layer_render_plant_glass_unknow_teng...']} />
          <PathBar crumbs={['obj']}><Num n={2} /><Disc /></PathBar>
          <div className="my-[2px]"><NameBar icon={<GeoIcon />} kind="Geometry" name="layer_render_plant_glass_unknow_tengman" /></div>
          <ObjectParams />
        </div>

        <div className="flex min-w-0 flex-col">
          <div className="grid flex-1 grid-cols-[minmax(0,469fr)_minmax(0,427fr)]">
            <div className="flex min-w-0 flex-col border-r-2 border-[#1f1f1f]">
              <PaneTabs tabs={['Take List', 'Performance Monitor', '/obj']} active={2} />
              <PathBar crumbs={['obj']} forward><Num n={2} /><Disc /></PathBar>
              <NetMenu />
              <ObjectNetwork />
            </div>
            <div className="flex min-w-0 flex-col">
              <PaneTabs tabs={['Redshift_plant']} />
              <PathBar crumbs={['obj', 'ropnet1']}><Num n={1} /><Disc /></PathBar>
              <div className="my-[2px]"><NameBar icon={<RedshiftIcon />} kind="Redshift" name="Redshift_plant" /></div>
              <RedshiftParams />
              <Splitter />
              <PaneTabs tabs={['/obj/ropnet1']} />
              <PathBar crumbs={['obj', 'ropnet1']} forward><Num n={1} /><Disc /></PathBar>
              <NetMenu />
              <OutputNetwork />
            </div>
          </div>
          <Splitter />
          <div className="grid grid-cols-[minmax(0,633fr)_minmax(0,263fr)]">
            <Spreadsheet />
            <RenderControls />
          </div>
        </div>
      </main>

      <Playbar />
      <footer className="flex h-[12px] shrink-0 items-center justify-end gap-[3px] bg-[#181818]">
        <div className="flex h-full items-center gap-[2px] bg-[#333] pl-[2px]">
          <NetBall />
          <Select label="Cooking node" value="/obj/wetmap/sol..." className="h-[10px] w-[56px]" />
          <RefreshCw className="h-[8px] w-[8px]" color="#777" />
          <Select label="Update mode" value="Auto Update" className="h-[10px] w-[48px]" />
        </div>
      </footer>

      <div role="tooltip" className="absolute left-[5px] top-[185px] border border-[#333] bg-black px-px py-px text-[#ddd]">LMB click to restore minimized pane.</div>
    </div>
  );
}
